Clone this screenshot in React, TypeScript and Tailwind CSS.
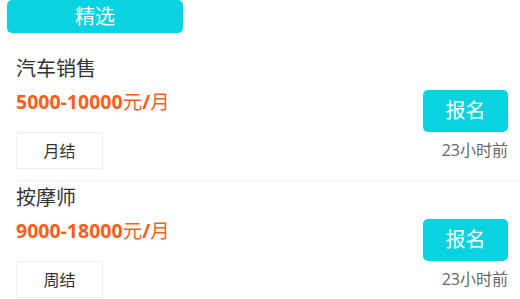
import React from "react";

const FONT = { fontFamily: '"Open Sans", "Noto Sans CJK SC", sans-serif' };

type Job = { title: string; min: string; tag: string; time: string };

const jobs: Job[] = [
  { title: "汽车销售", min: "5000-10000", tag: "月结", time: "23小时前" },
  { title: "按摩师", min: "9000-18000", tag: "周结", time: "23小时前" },
];

export default function App() {
  return (
    <div className="w-[520px] h-[299px] overflow-hidden bg-white" style={FONT}>
      <div className="ml-[7px] w-[176px] h-[33px] rounded-[5px] bg-[#0ad3e1] flex items-center justify-center text-white text-[20px] leading-none">
        精选
      </div>
      <div className="mt-[19px]">
        {jobs.map((j, i) => (
          <div
            key={i}
            className={`ml-4 pr-3 h-[129px] flex justify-between ${i === 0 ? "border-b border-[#f2f2f2]" : ""}`}
          >
            <div className="flex flex-col items-start pt-[3px]">
              <div className="text-[20px] leading-[28px] text-[#333]">{j.title}</div>
              <div className="mt-[6px] text-[19.5px] leading-[26px] text-[#ff5d1c]">
                <span className="font-bold">{j.min}</span>
                <span>元</span>
                <span className="font-bold">/</span>
                <span>月</span>
              </div>
              <div className="mt-[17px] w-[87px] h-[37px] border border-[#eeeeee] flex items-center justify-center text-[16px] text-[#333]">
                {j.tag}
              </div>
            </div>
            <div className="flex flex-col items-end pt-[38px]">
              <div className="w-[85px] h-[42px] rounded-[5px] bg-[#0ad3e1] flex items-center justify-center text-white text-[20px]">
                报名
              </div>
              <div className="mt-[8px] text-[16px] leading-[20px] text-[#666]">{j.time}</div>
            </div>
          </div>
        ))}
      </div>
    </div>
  );
}
